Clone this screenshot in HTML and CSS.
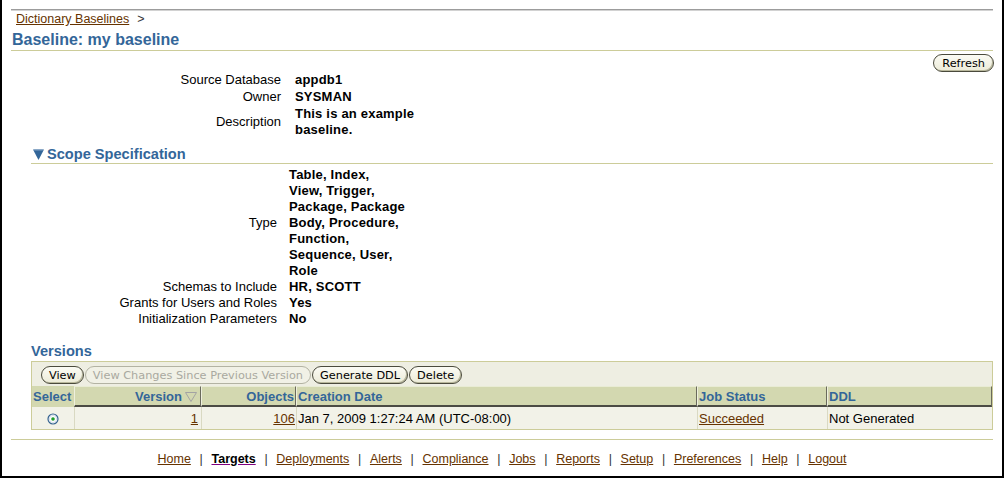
FILE: index.html
```html
<!DOCTYPE html>
<html lang="en">
<head>
<meta charset="utf-8">
<title>Baseline: my baseline</title>
<link rel="stylesheet" href="styles.css">
</head>
<body>
<div class="page">
  <div class="toprule"></div>
  <div class="crumbs"><a href="#">Dictionary Baselines</a><span class="sep">&gt;</span></div>
  <h1 class="title">Baseline: my baseline</h1>
  <div class="actions"><button class="btn" type="button">Refresh</button></div>

  <dl class="props props-main">
    <dt>Source Database</dt><dd>appdb1</dd>
    <dt>Owner</dt><dd>SYSMAN</dd>
    <dt>Description</dt><dd class="wrap">This is an example baseline.</dd>
  </dl>

  <h2 class="section">
    <svg class="disclose" width="11" height="11" viewBox="0 0 11 11" aria-hidden="true"><path d="M0 0.5 H11 L5.5 11 Z" fill="#336699"/><path d="M1.2 1.2 H9.8" stroke="#6d93bb" stroke-width="1"/></svg>
    <span>Scope Specification</span>
  </h2>

  <dl class="props props-scope">
    <dt>Type</dt><dd>Table, Index,<br>View, Trigger,<br>Package, Package<br>Body, Procedure,<br>Function,<br>Sequence, User,<br>Role</dd>
    <dt>Schemas to Include</dt><dd>HR, SCOTT</dd>
    <dt>Grants for Users and Roles</dt><dd>Yes</dd>
    <dt>Initialization Parameters</dt><dd>No</dd>
  </dl>

  <h2 class="section plain">Versions</h2>

  <div class="versions">
    <div class="toolbar">
      <button class="btn" type="button">View</button>
      <button class="btn" type="button" disabled>View Changes Since Previous Version</button>
      <button class="btn" type="button">Generate DDL</button>
      <button class="btn" type="button">Delete</button>
    </div>
    <table class="grid">
      <colgroup>
        <col class="c-sel"><col class="c-ver"><col class="c-obj"><col class="c-date"><col class="c-job"><col class="c-ddl">
      </colgroup>
      <thead>
        <tr>
          <th class="sel">Select</th>
          <th class="sort num">Version<svg class="sorticon" width="12" height="10" viewBox="0 0 12 10" aria-hidden="true"><path d="M0.5 0.5 H11.5 L6 9.5 Z" fill="none" stroke="#a3a3a3"/></svg></th>
          <th class="sort num">Objects</th>
          <th class="sort">Creation Date</th>
          <th class="sort">Job Status</th>
          <th class="sort">DDL</th>
        </tr>
      </thead>
      <tbody>
        <tr>
          <td class="sel"><svg width="12" height="12" viewBox="0 0 12 12" aria-hidden="true"><circle cx="6" cy="6" r="5" fill="#fff" stroke="#34628f" stroke-width="1.2"/><circle cx="6" cy="6" r="3.6" fill="none" stroke="#c9d6e3" stroke-width="0.8"/><circle cx="6" cy="6" r="1.8" fill="#1e9e2a"/></svg></td>
          <td class="num pr3"><a href="#">1</a></td>
          <td class="num"><a href="#">106</a></td>
          <td>Jan 7, 2009 1:27:24 AM (UTC-08:00)</td>
          <td><a href="#">Succeeded</a></td>
          <td>Not Generated</td>
        </tr>
      </tbody>
    </table>
  </div>

  <div class="bottomrule"></div>

  <div class="footer">
    <a href="#">Home</a><span class="bar">|</span><a href="#" class="current">Targets</a><span class="bar">|</span><a href="#">Deployments</a><span class="bar">|</span><a href="#">Alerts</a><span class="bar">|</span><a href="#">Compliance</a><span class="bar">|</span><a href="#">Jobs</a><span class="bar">|</span><a href="#">Reports</a><span class="bar">|</span><a href="#">Setup</a><span class="bar">|</span><a href="#">Preferences</a><span class="bar">|</span><a href="#">Help</a><span class="bar">|</span><a href="#">Logout</a>
  </div>
</div>
</body>
</html>
```

FILE: styles.css
```css
* { box-sizing: border-box; }
html, body { margin: 0; padding: 0; background: #fff; }
body {
  font-family: "Liberation Sans", Arial, sans-serif;
  font-size: 13px;
  color: #000;
}
a { color: #663300; }

.page {
  width: 1004px;
  height: 478px;
  border: 2px solid #000;
  border-top: 0;
  padding: 9px 9px 0 9px;
  overflow: hidden;
}

.toprule {
  height: 2px;
  border-top: 1px solid #9c9c9c;
  border-bottom: 1px solid #d2d2d2;
}

.crumbs {
  font-size: 12.5px;
  line-height: 16px;
  padding-left: 5px;
}
.crumbs .sep { margin-left: 8px; color: #333; }

.title {
  margin: 2px 0 0 0;
  padding-left: 1px;
  font-size: 16px;
  font-weight: bold;
  line-height: 21px;
  color: #336699;
  border-bottom: 1px solid #cccc99;
}

.actions {
  display: flex;
  justify-content: flex-end;
  margin-top: 3px;
  margin-right: -1px;
}

.btn {
  font-family: "DejaVu Sans", Tahoma, sans-serif;
  font-size: 11.3px;
  height: 18px;
  line-height: 15px;
  padding: 0 7px;
  border: 1px solid #4a4a3c;
  border-radius: 9px;
  background: linear-gradient(#fbfbf4, #ecebd8);
  color: #000;
  box-shadow: inset -1px -1px 0 #b9b89c;
  cursor: pointer;
}
.actions .btn { padding: 0 8px; }
.btn:disabled {
  color: #a9a9a0;
  border-color: #b3b3a3;
  box-shadow: none;
  background: #f1f1e6;
  cursor: default;
}

.props {
  display: grid;
  line-height: 16px;
  margin: 0;
}
.props dt { text-align: right; align-self: center; }
.props dd { margin: 0; font-weight: bold; letter-spacing: 0.2px; }
.props-main { grid-template-columns: 270px 125px; column-gap: 14px; row-gap: 1px; }
.props-scope { grid-template-columns: 266px 140px; column-gap: 12px; margin-top: 3px; }

.section {
  display: flex;
  align-items: center;
  gap: 3px;
  margin: 7px 0 0 20px;
  padding-left: 2px;
  font-size: 14.6px;
  font-weight: bold;
  line-height: 18px;
  color: #336699;
  border-bottom: 1px solid #cccc99;
}
.section.plain {
  margin-top: 15px;
  padding-left: 0;
  line-height: 19px;
  border-bottom: 0;
}

.versions {
  margin-left: 20px;
  border: 1px solid #cccc99;
}
.toolbar {
  display: flex;
  gap: 1px;
  height: 24px;
  padding: 4px 0 0 9px;
  background: #eeeee2;
}

.grid {
  width: 960px;
  table-layout: fixed;
  border-collapse: separate;
  border-spacing: 0;
}
.c-sel { width: 42px; }
.c-ver { width: 127px; }
.c-obj { width: 95px; }
.c-date { width: 401px; }
.c-job { width: 130px; }
.c-ddl { width: 165px; }

.grid th {
  font-weight: bold;
  color: #336699;
  background: #d3d8b0;
  text-align: left;
  line-height: 16px;
  padding: 2px 1px 0 1px;
  border-top: 1px solid #d3d8b0;
  border-bottom: 2px solid #d3d8b0;
  white-space: nowrap;
}
.grid th.sort {
  border-top: 1px solid #e9ecd5;
  border-left: 1px solid #eef0dd;
  border-right: 1px solid #6a6a5c;
  border-bottom: 2px solid #4b4b44;
}
.grid th.num, .grid td.num { text-align: right; }
.sorticon { margin: 0 2px 0 3px; vertical-align: -1px; }

.grid td {
  background: #f2f2e8;
  line-height: 21px;
  padding: 1px 1px 0 1px;
  border-left: 1px solid #d9d9c2;
  white-space: nowrap;
}
.grid td:first-child { border-left: 0; }
.grid td.sel { text-align: center; padding: 0; }
.grid td.sel svg { vertical-align: middle; }
.grid td.pr3 { padding-right: 3px; }

.bottomrule {
  margin-top: 9px;
  border-top: 1px solid #cccc99;
}

.footer {
  margin-top: 11px;
  text-align: center;
  font-size: 12.5px;
  line-height: 16px;
}
.footer .bar { margin: 0 8.7px; color: #333; }
.footer a.current {
  color: #000;
  font-weight: bold;
  text-decoration-color: #800080;
}
```
